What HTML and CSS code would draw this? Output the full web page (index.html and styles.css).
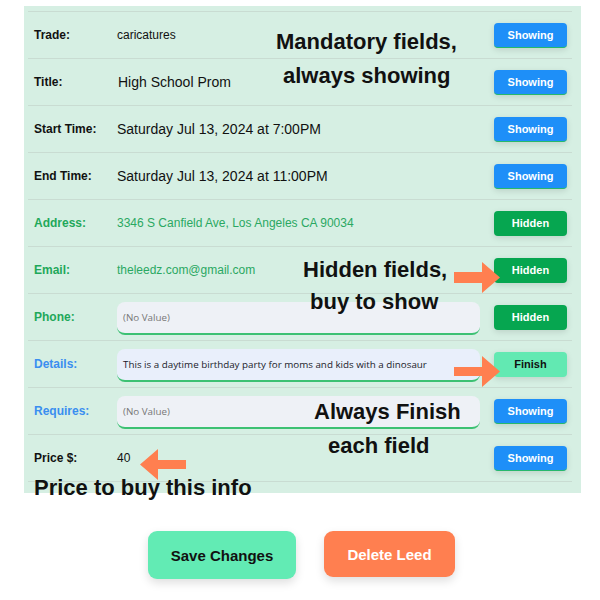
FILE: index.html
```html
<!DOCTYPE html>
<html>
<head>
<meta charset="utf-8">
<link rel="stylesheet" href="styles.css">
</head>
<body>
<div class="page">
  <div class="panel">
    <div class="row">
      <span class="label">Trade:</span>
      <span class="value small">caricatures</span>
      <button class="tag showing">Showing</button>
    </div>
    <div class="row">
      <span class="label">Title:</span>
      <span class="value big title">High School Prom</span>
      <button class="tag showing">Showing</button>
    </div>
    <div class="row">
      <span class="label">Start Time:</span>
      <span class="value big">Saturday Jul 13, 2024 at 7:00PM</span>
      <button class="tag showing">Showing</button>
    </div>
    <div class="row">
      <span class="label">End Time:</span>
      <span class="value big">Saturday Jul 13, 2024 at 11:00PM</span>
      <button class="tag showing">Showing</button>
    </div>
    <div class="row">
      <span class="label green">Address:</span>
      <span class="value small green-text">3346 S Canfield Ave, Los Angeles CA 90034</span>
      <button class="tag hidden">Hidden</button>
    </div>
    <div class="row">
      <span class="label green">Email:</span>
      <span class="value small green-text">theleedz.com@gmail.com</span>
      <button class="tag hidden">Hidden</button>
    </div>
    <div class="row">
      <span class="label green">Phone:</span>
      <div class="field empty">(No Value)</div>
      <button class="tag hidden">Hidden</button>
    </div>
    <div class="row">
      <span class="label blue">Details:</span>
      <div class="field filled">This is a daytime birthday party for moms and kids with a dinosaur</div>
      <button class="tag finish">Finish</button>
    </div>
    <div class="row">
      <span class="label blue">Requires:</span>
      <div class="field empty">(No Value)</div>
      <button class="tag showing">Showing</button>
    </div>
    <div class="row last">
      <span class="label">Price $:</span>
      <span class="value small">40</span>
      <button class="tag showing">Showing</button>
    </div>
  </div>

  <div class="actions">
    <button class="action save">Save Changes</button>
    <button class="action delete">Delete Leed</button>
  </div>

  <div class="note n-mand1">Mandatory fields,</div>
  <div class="note n-mand2">always showing</div>
  <div class="note n-hid1">Hidden fields,</div>
  <div class="note n-hid2">buy to show</div>
  <div class="note n-fin1">Always Finish</div>
  <div class="note n-fin2">each field</div>
  <div class="note n-price">Price to buy this info</div>

  <svg class="arrow a-email" width="46" height="31" viewBox="0 0 46 31"><polygon points="0,10 28,10 28,0 46,15.5 28,31 28,21 0,21" fill="#ff7f50"/></svg>
  <svg class="arrow a-details" width="46" height="31" viewBox="0 0 46 31"><polygon points="0,11 28,11 28,0 46,15.5 28,31 28,20 0,20" fill="#ff7f50"/></svg>
  <svg class="arrow a-price" width="46" height="31" viewBox="0 0 46 31"><polygon points="46,11 18,11 18,0 0,15.5 18,31 18,20 46,20" fill="#ff7f50"/></svg>
</div>
</body>
</html>
```
FILE: styles.css
```css
* { box-sizing: border-box; }
body {
  margin: 0;
  background: #ffffff;
  font-family: "Liberation Sans", Arial, sans-serif;
  color: #111;
}
.page {
  position: relative;
  width: 600px;
  height: 600px;
}
.panel {
  margin: 6px 0 0 24px;
  width: 557px;
  padding: 5px 9px 11px 4px;
  background: #d6efe3;
}
.row {
  display: grid;
  grid-template-columns: 83px 363px 73px;
  column-gap: 0;
  align-items: center;
  height: 47px;
  padding: 0 5px 0 6px;
  border-top: 1px solid #c9dcd2;
}
.row.last { border-bottom: 1px solid #c9dcd2; height: 48px; }
.label {
  font-size: 12px;
  font-weight: bold;
  color: #111;
}
.label.green { color: #1fa85a; }
.label.blue { color: #3a8ef0; }
.value { color: #111; }
.value.small { font-size: 12px; }
.value.big { font-size: 14px; }
.value.title { padding-left: 1px; }
.green-text { color: #2aa862; }
.field {
  height: 33px;
  margin-top: 2px;
  border-radius: 8px;
  border-bottom: 2px solid #3cc173;
  display: flex;
  align-items: center;
  padding: 0 6px;
  font-family: "Open Sans", "Noto Sans", sans-serif;
  font-size: 9.8px;
}
.field.empty { background: #eef1f6; color: #777; }
.field.filled { background: #e9effb; color: #1a1a2a; }
.tag {
  margin-left: 14px;
  width: 73px;
  height: 25px;
  border: none;
  border-radius: 4px;
  font-family: "Liberation Sans", Arial, sans-serif;
  font-weight: bold;
  font-size: 11px;
  color: #fff;
  padding: 0;
  box-shadow: 0 2px 6px rgba(0, 0, 0, 0.12);
}
.row .tag { justify-self: start; }
.row { grid-template-columns: 83px 363px 87px; }
.tag.showing { background: #1e8ff8; border-bottom: 1px solid #27b86c; }
.tag.hidden { background: #06a650; }
.tag.finish { background: #62e9b2; color: #111; }
.actions {
  display: flex;
  justify-content: center;
  align-items: flex-start;
  gap: 28px;
  margin-top: 38px;
  padding-left: 3px;
}
.action {
  border: none;
  border-radius: 9px;
  font-family: "Liberation Sans", Arial, sans-serif;
  font-weight: bold;
  font-size: 15px;
  padding: 0;
  box-shadow: 0 4px 10px rgba(0, 0, 0, 0.13);
}
.action.save { width: 148px; height: 48px; background: #62ebb4; color: #111; }
.action.delete { width: 131px; height: 46px; background: #ff7f50; color: #fff; }
.note {
  position: absolute;
  font-family: "Liberation Sans", Arial, sans-serif;
  font-weight: bold;
  font-size: 22px;
  line-height: 22px;
  color: #111;
  white-space: nowrap;
}
.n-mand1 { left: 276px; top: 25px; }
.n-mand2 { left: 283px; top: 59px; }
.n-hid1 { left: 303px; top: 253px; }
.n-hid2 { left: 310px; top: 285px; }
.n-fin1 { left: 314px; top: 395px; }
.n-fin2 { left: 328px; top: 429px; }
.n-price { left: 34px; top: 471px; }
.arrow { position: absolute; }
.a-email { left: 454px; top: 256px; }
.a-details { left: 454px; top: 350px; }
.a-price { left: 140px; top: 443px; }
```
